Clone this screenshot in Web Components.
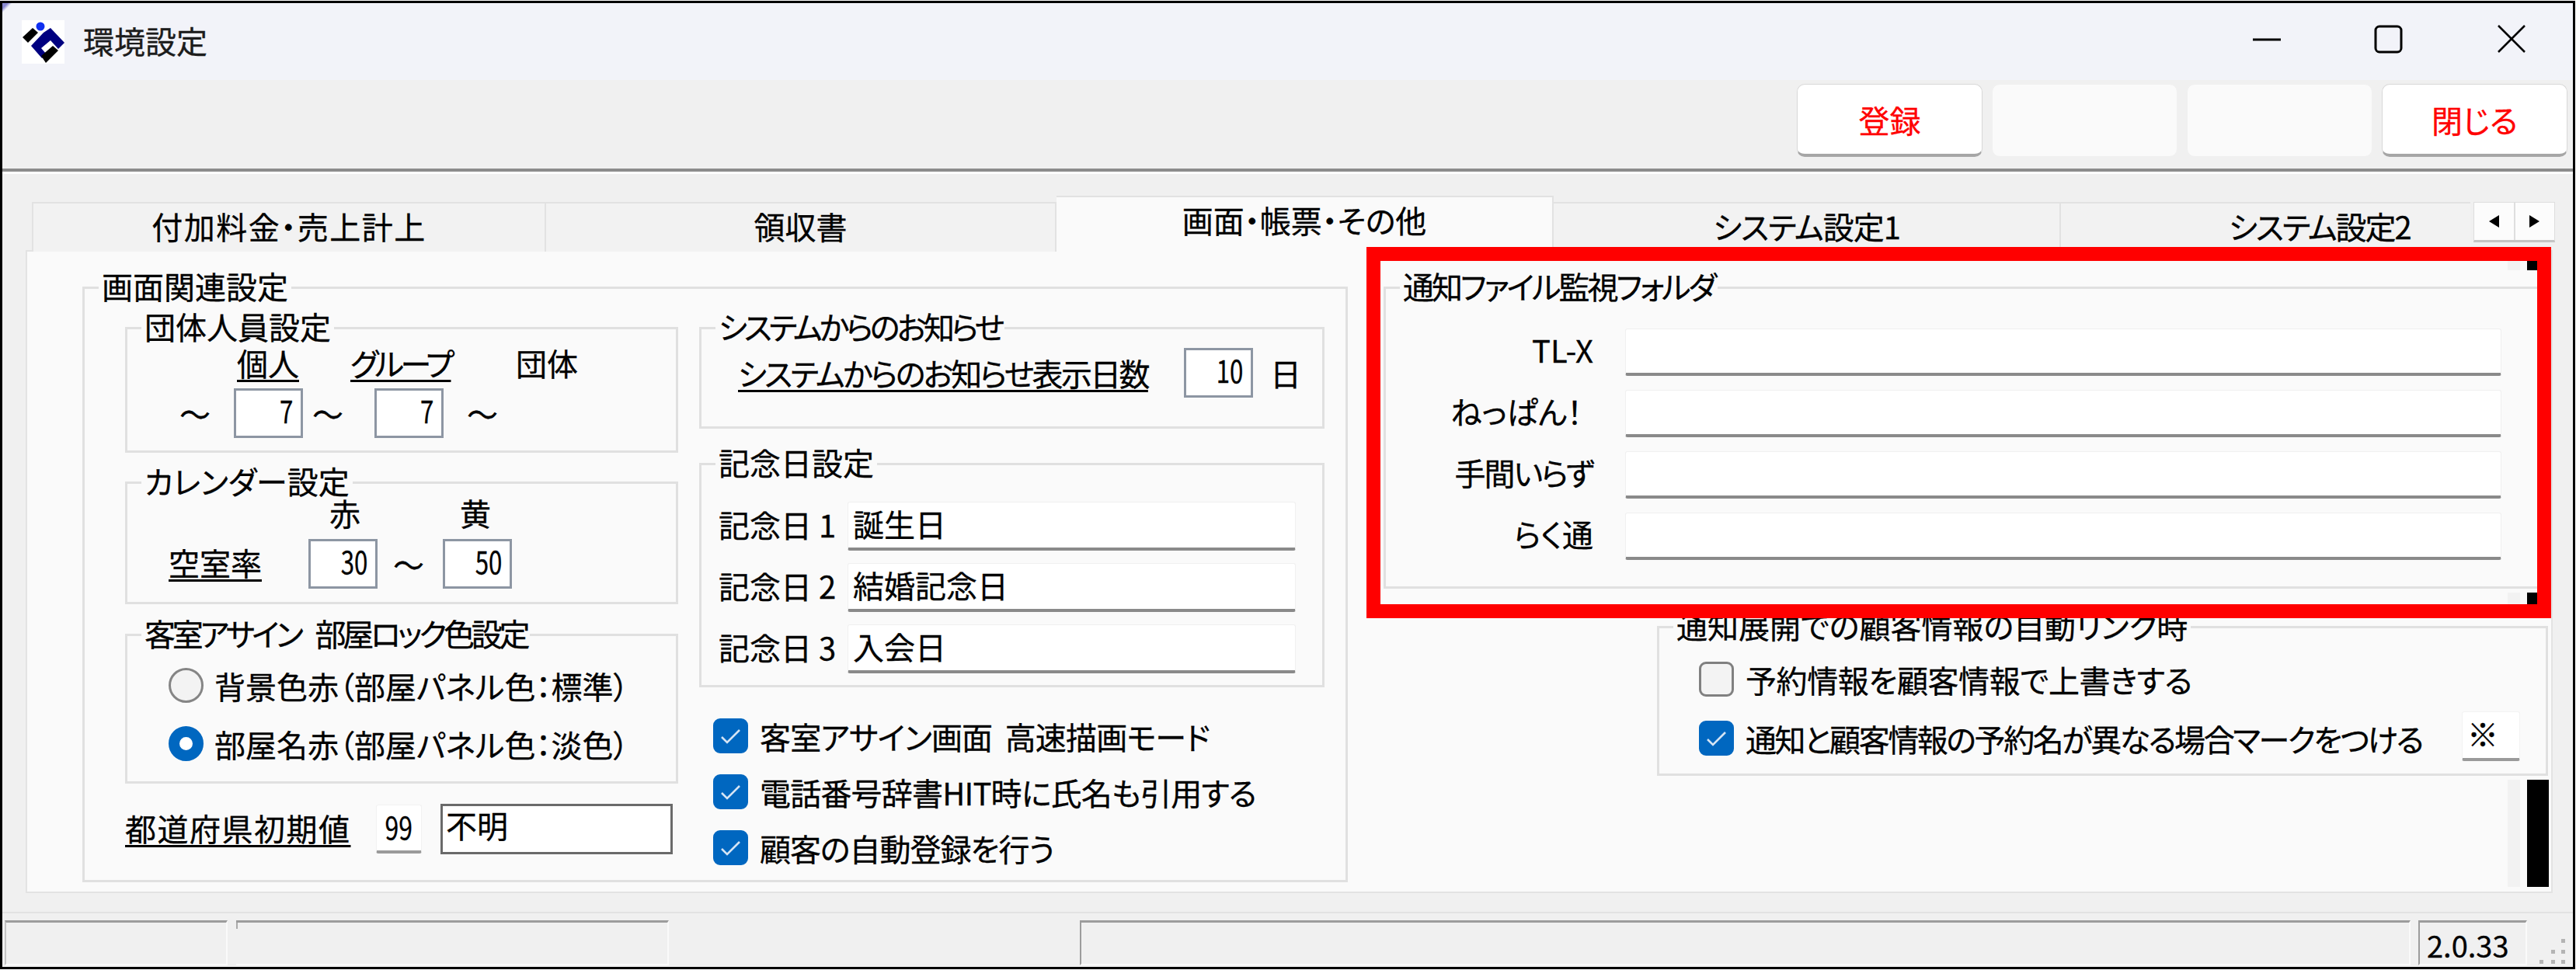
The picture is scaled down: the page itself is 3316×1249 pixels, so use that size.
<!DOCTYPE html>
<html lang="ja">
<head>
<meta charset="utf-8">
<title>環境設定</title>
<style>
  html, body { margin: 0; padding: 0; background: #fff; overflow: hidden; }
</style>
</head>
<body>
<app-window label="環境設定">
  <tool-bar>
    <tool-button>登録</tool-button>
    <tool-button disabled></tool-button>
    <tool-button disabled></tool-button>
    <tool-button>閉じる</tool-button>
  </tool-bar>
  <tab-strip>
    <tab-item size="662" style="letter-spacing:1.5px">付加料金・売上計上</tab-item>
    <tab-item size="657">領収書</tab-item>
    <tab-item size="640" active>画面・帳票・その他</tab-item>
    <tab-item size="653" style="letter-spacing:-1px">システム設定1</tab-item>
    <tab-item size="527" indent="216" style="letter-spacing:-2px">システム設定2</tab-item>
  </tab-strip>
  <tab-page>
    <screen-settings></screen-settings>
    <notice-settings></notice-settings>
  </tab-page>
  <status-bar></status-bar>
  <highlight-box></highlight-box>
</app-window>

<script>
// Crea una clase sencilla: solo estilos + markup dentro del shadow root
function simple(tag, html) {
  customElements.define(tag, class extends HTMLElement {
    constructor() {
      super();
      this.attachShadow({ mode: 'open' });
      this.shadowRoot.innerHTML = typeof html === 'function' ? html(this) : html;
    }
  });
}

// Ventana principal
simple('app-window', el => `
  <style>
    :host {
      display: flex; flex-direction: column; position: relative; box-sizing: border-box;
      width: 3315px; height: 1247px; margin: 1px 1px 1px 0; border: 3px solid #000;
      background: #f0f0f0; color: #000; overflow: hidden;
      font: 400 40px/40px "Noto Sans CJK JP", "Noto Sans", sans-serif;
      font-feature-settings: "palt"; -webkit-text-stroke: .3px;
    }
    .title {
      display: flex; align-items: center; height: 99px; flex: none; background: #f2f3f9;
      background-image: linear-gradient(135deg, #8a8ad0 0, #8a8ad0 5px, transparent 9px);
    }
    .logo { width: 55px; height: 56px; margin: 0 24px 0 25px; flex: none; }
    .name { color: #1c1c1c; margin-bottom: 3px; }
    .ctl { display: flex; margin-left: auto; }
    .ctl svg { display: block; }
  </style>
  <div class="title">
    <svg class="logo" viewBox="0 0 55 56">
      <rect width="55" height="56" fill="#fff"/>
      <circle cx="24" cy="8" r="5.5" fill="#1030f0"/>
      <path d="M1 22 14 10 21 16 8 29Z" fill="#000"/>
      <path d="M12 33 28 16 37 10 55 29 47 37 37 26 25 36 32 44 26 49Z" fill="#000080"/>
      <path d="M25 46 40 33 47 39 31 55Z" fill="#000"/>
    </svg>
    <span class="name">${el.getAttribute('label')}</span>
    <div class="ctl">
      <svg width="412" height="99" viewBox="0 0 412 99" fill="none" stroke="#000" stroke-width="3">
        <path d="M0 47H36"/>
        <rect x="158" y="30" width="33" height="33" rx="5"/>
        <path d="M316 29 350 63M350 29 316 63" stroke-width="2.5"/>
      </svg>
    </div>
  </div>
  <slot></slot>`);

// Barra de botones
simple('tool-bar', `
  <style>
    :host {
      display: flex; justify-content: flex-end; gap: 12px; box-sizing: border-box; flex: none;
      height: 121px; padding: 5px 7px 0 0; background: #f0f0f0;
      border-bottom: 3px solid #fff; box-shadow: inset 0 -4px 0 #8c8c8c;
    }
  </style>
  <slot></slot>`);

simple('tool-button', `
  <style>
    :host {
      display: flex; align-items: center; justify-content: center; box-sizing: border-box;
      width: 239px; height: 94px; border-radius: 10px; background: #fff; color: #f00;
      border: 1px solid #d8d8d8; border-bottom: 4px solid #a6a6a6;
    }
    :host([disabled]) { background: #fafafa; border: 1px solid #f0f0f0; }
  </style>
  <slot></slot>`);

// Pestañas
simple('tab-strip', `
  <style>
    :host {
      display: flex; align-items: flex-end; flex: none; position: relative; z-index: 1;
      height: 72px; margin: 28px 0 -2px 38px;
    }
    .arrows {
      display: flex; align-self: flex-start; box-sizing: border-box; width: 105px; height: 52px;
      margin: 8px 0 0 4px; background: #fcfcfc; border: 1px solid #dedede; border-bottom: 3px solid #c4c4c4;
    }
    .arrows div { flex: 1; display: flex; align-items: center; justify-content: center; }
    .arrows div + div { border-left: 2px solid #dedede; }
    .l { border: 8px solid transparent; border-left: 0; border-right: 13px solid #000; }
    .r { border: 8px solid transparent; border-right: 0; border-left: 13px solid #000; }
  </style>
  <slot></slot>
  <div class="arrows"><div><i class="l"></i></div><div><i class="r"></i></div></div>`);

simple('tab-item', el => `
  <style>
    :host {
      display: flex; align-items: center; justify-content: center; box-sizing: border-box;
      width: ${el.getAttribute('size')}px; height: 64px; padding-bottom: 4px;
      background: #f2f2f2; border: 2px solid #e2e2e2; border-width: 2px 2px 0 0;
    }
    :host(:first-child) { border-left-width: 2px; }
    :host([active]) { height: 72px; background: #fafafa; padding-bottom: 12px; }
    :host([indent]) { justify-content: flex-start; padding-left: ${el.getAttribute('indent')}px; border-right: 0; }
  </style>
  <slot></slot>`);

// Cuerpo de la pestaña
simple('tab-page', `
  <style>
    :host {
      display: grid; grid-template-columns: 1629px 1499px; column-gap: 46px; flex: none;
      box-sizing: border-box; width: 3253px; height: 828px; margin: 0 0 24px 30px;
      padding: 24px 0 0 71px; background: #fafafa; border: 2px solid #e3e3e3;
    }
  </style>
  <slot></slot>`);

// Marco con leyenda
simple('group-box', el => `
  <style>
    :host { display: block; box-sizing: border-box; min-width: 0; }
    fieldset {
      box-sizing: border-box; height: 100%; margin: 0; padding: 0; min-width: 0;
      border: 3px solid #e0e0e0;
    }
    legend {
      margin-left: 18px; padding: 0 4px; line-height: 40px; height: 44px; white-space: pre;
      letter-spacing: var(--legend-spacing, 0);
    }
  </style>
  <fieldset><legend>${el.getAttribute('label')}</legend><slot></slot></fieldset>`);

// Caja de texto
simple('text-field', el => `
  <style>
    :host {
      display: block; box-sizing: border-box; background: #fff; white-space: nowrap; flex: none;
      border: 1px solid #f0f0f0; border-bottom: 4px solid #8a8a8a; border-radius: 3px;
      padding: 7px 6px 0;
    }
    :host([kind="num"]) {
      width: 89px; height: 64px; text-align: right; padding: 5px 10px 0 0; border-radius: 0;
      border: 3px solid #8d96a3;
    }
    :host([kind="frame"]) { border: 3px solid #6a6a6a; padding: 4px 4px 0; border-radius: 0; }
    :host([kind="small"]) { border: 1px solid #f2f2f2; border-bottom: 4px solid #9a9a9a; }
    /* los dígitos del original son muy estrechos */
    span { display: inline-block; }
    :host([kind="num"]) span { transform: scaleX(.78); transform-origin: right; }
    :host([narrow]) span { transform: scaleX(.8); transform-origin: center; }
  </style><span>${el.getAttribute('value') || ''}</span>`);

// Etiqueta (subrayada o no)
simple('form-label', `
  <style>
    :host { display: block; white-space: nowrap; flex: none; line-height: 40px; }
    :host([underline]) {
      text-decoration: underline 3px; text-underline-offset: 5px; text-decoration-skip-ink: none;
    }
  </style><slot></slot>`);

// Casilla
simple('check-box', el => `
  <style>
    :host { display: flex; align-items: center; gap: 15px; height: 45px; white-space: nowrap; }
    .box { width: 45px; height: 45px; box-sizing: border-box; border-radius: 9px; flex: none;
      border: 3px solid #808080; background: #f3f3f3; display: block; }
    :host([checked]) .box { background: #0067c0; border-color: #0067c0; }
  </style>
  <svg class="box" viewBox="0 0 39 39" fill="none">
    ${el.hasAttribute('checked') ? '<path d="M8 21 15 28 31 12" stroke="#d4e4f4" stroke-width="2.6"/>' : ''}
  </svg>
  <span><slot></slot></span>`);

// Botón de opción
simple('radio-button', `
  <style>
    :host { display: flex; align-items: center; gap: 14px; height: 45px; white-space: nowrap; }
    i { width: 45px; height: 45px; box-sizing: border-box; border-radius: 50%; flex: none;
      border: 3px solid #858585; background: #f3f3f3; }
    :host([checked]) i { border: 14px solid #0067c0; background: #fff; }
  </style>
  <i></i><span><slot></slot></span>`);

// Panel izquierdo: 画面関連設定
simple('screen-settings', `
  <style>
    :host { display: block; }
    .outer { height: 788px; }
    .cols { display: grid; grid-template-columns: 712px 805px; column-gap: 27px; padding: 8px 0 0 52px; }
    .col { display: flex; flex-direction: column; }
    .row { display: flex; align-items: center; }
    .g1 { height: 183px; }
    .g2 { height: 179px; margin-top: 16px; }
    .g3 { height: 214px; margin-top: 17px; --legend-spacing: -4.2px; }
    .g4 { height: 152px; --legend-spacing: -4px; }
    .g5 { height: 310px; margin-top: 23px; }
    .radios { display: flex; flex-direction: column; gap: 30px; padding: 21px 0 0 53px; }
    .pref { height: 65px; margin-top: 26px; }
    .memo { display: flex; flex-direction: column; gap: 16px; padding: 27px 0 0 22px; }
    .memo .row { gap: 20px; }
    .memo form-label { width: 146px; padding-bottom: 6px; }
    .memo text-field { width: 577px; height: 63px; }
    .checks { display: flex; flex-direction: column; gap: 27px; margin: 40px 0 0 18px; }
  </style>
  <group-box class="outer" label="画面関連設定">
    <div class="cols">
      <div class="col">
        <group-box class="g1" label="団体人員設定">
          <div class="row" style="padding:3px 0 0 141px">
            <form-label underline>個人</form-label>
            <form-label underline style="margin-left:66px;width:129px;letter-spacing:-4.5px">グループ</form-label>
            <form-label style="margin-left:84px">団体</form-label>
          </div>
          <div class="row" style="margin-top:13px;padding-left:67px">
            <form-label>～</form-label>
            <text-field kind="num" value="7" style="margin-left:30px"></text-field>
            <form-label style="margin-left:12px">～</form-label>
            <text-field kind="num" value="7" style="margin-left:40px"></text-field>
            <form-label style="margin-left:30px">～</form-label>
          </div>
        </group-box>
        <group-box class="g2" label="カレンダー設定">
          <div class="row" style="margin-top:-3px;padding-left:260px">
            <form-label>赤</form-label>
            <form-label style="margin-left:128px">黄</form-label>
          </div>
          <div class="row" style="margin-top:14px;padding-left:53px">
            <form-label underline style="padding-bottom:4px">空室率</form-label>
            <text-field kind="num" value="30" style="margin-left:60px"></text-field>
            <form-label style="margin-left:20px">～</form-label>
            <text-field kind="num" value="50" style="margin-left:24px"></text-field>
          </div>
        </group-box>
        <group-box class="g3" label="客室アサイン    部屋ロック色設定">
          <div class="radios">
            <radio-button>背景色赤（部屋パネル色：標準）</radio-button>
            <radio-button checked>部屋名赤（部屋パネル色：淡色）</radio-button>
          </div>
        </group-box>
        <div class="row pref">
          <form-label underline style="width:289px;letter-spacing:1.5px;padding-bottom:4px">都道府県初期値</form-label>
          <text-field kind="small" narrow value="99" style="width:59px;height:63px;margin-left:34px;padding:7px 0 0;text-align:center"></text-field>
          <text-field kind="frame" value="不明" style="width:299px;height:65px;margin-left:24px"></text-field>
        </div>
      </div>
      <div class="col">
        <group-box class="g4" label="システムからのお知らせ">
          <div class="row" style="padding:4px 0 0 47px">
            <form-label underline style="width:574px;letter-spacing:-2.7px">システムからのお知らせ表示日数</form-label>
            <text-field kind="num" value="10"></text-field>
            <form-label style="margin-left:22px">日</form-label>
          </div>
        </group-box>
        <group-box class="g5" label="記念日設定">
          <div class="memo">
            <div class="row"><form-label>記念日 1</form-label><text-field value="誕生日"></text-field></div>
            <div class="row"><form-label>記念日 2</form-label><text-field value="結婚記念日"></text-field></div>
            <div class="row"><form-label>記念日 3</form-label><text-field value="入会日"></text-field></div>
          </div>
        </group-box>
        <div class="checks">
          <check-box checked style="letter-spacing:-.8px">客室アサイン画面&nbsp;&nbsp;高速描画モード</check-box>
          <check-box checked style="letter-spacing:-.8px">電話番号辞書HIT時に氏名も引用する</check-box>
          <check-box checked style="letter-spacing:-1px">顧客の自動登録を行う</check-box>
        </div>
      </div>
    </div>
  </group-box>`);

// Panel derecho: carpetas y enlace de clientes
simple('notice-settings', `
  <style>
    :host { display: block; position: relative; }
    .folder { height: 410px; --legend-spacing: -3px; }
    .rows {
      display: grid; grid-template-columns: 267px 1128px; column-gap: 41px; row-gap: 18px;
      grid-auto-rows: 61px; align-items: center; padding-top: 31px;
    }
    .rows form-label { text-align: right; padding-bottom: 8px; }
    .rows text-field { height: 61px; }
    .link { width: 1147px; height: 214px; margin: 27px 0 0 352px; }
    .link-body { display: flex; flex-direction: column; gap: 19px; padding: 23px 0 0 51px; }
    .mark-row { display: flex; align-items: center; justify-content: space-between; padding-right: 33px; }
    .mark-row check-box { margin-top: 5px; letter-spacing: -2.4px; }
    .stub { position: absolute; left: 1447px; width: 16px; background: #f2f2f2; }
    .stub::after { content: ""; position: absolute; left: 25px; top: 0; bottom: 0; width: 28px; background: #000; }
  </style>
  <group-box class="folder" label="通知ファイル監視フォルダ">
    <div class="rows">
      <form-label>TL-X</form-label><text-field></text-field>
      <form-label style="padding-right:14px">ねっぱん！</form-label><text-field></text-field>
      <form-label style="letter-spacing:-2px">手間いらず</form-label><text-field></text-field>
      <form-label>らく通</form-label><text-field></text-field>
    </div>
  </group-box>
  <group-box class="link" label="通知展開での顧客情報の自動リンク時">
    <div class="link-body">
      <check-box style="letter-spacing:-.4px">予約情報を顧客情報で上書きする</check-box>
      <div class="mark-row">
        <check-box checked>通知と顧客情報の予約名が異なる場合マークをつける</check-box>
        <text-field kind="small" value="※" style="width:75px;height:64px"></text-field>
      </div>
    </div>
  </group-box>
  <span class="stub" style="top:-18px;height:18px"></span>
  <span class="stub" style="top:415px;height:20px"></span>
  <span class="stub" style="top:656px;height:138px"></span>`);

// Barra de estado
simple('status-bar', `
  <style>
    :host {
      display: flex; box-sizing: border-box; flex: 1; position: relative;
      padding: 9px 0 0 3px; border-top: 2px solid #e2e2e2; font-size: 38px;
    }
    div {
      box-sizing: border-box; height: 58px; flex: none;
      border-top: 3px solid #9c9c9c; border-right: 2px solid #fafafa; border-bottom: 2px solid #fafafa;
    }
    .a { width: 287px; border-left: 2px solid #c4c4c4; margin-right: 11px; }
    .b { width: 557px; margin-right: 529px; background: linear-gradient(#aaa,#aaa) 0 0/2px 8px no-repeat; }
    .c { width: 1713px; border-left: 2px solid #9c9c9c; margin-right: 10px; }
    .d { width: 140px; border-left: 2px solid #9c9c9c; padding: 11px 0 0 9px; line-height: 36px; }
    svg { position: absolute; right: 8px; bottom: 3px; }
  </style>
  <div class="a"></div><div class="b"></div><div class="c"></div><div class="d">2.0.33</div>
  <svg width="36" height="36" fill="#b4b4b4">
    <rect x="29" y="3" width="5" height="5"/><rect x="16" y="17" width="5" height="5"/><rect x="29" y="17" width="5" height="5"/>
    <rect x="1" y="30" width="5" height="5"/><rect x="16" y="30" width="5" height="5"/><rect x="29" y="30" width="5" height="5"/>
  </svg>`);

// Recuadro rojo de la captura
simple('highlight-box', `
  <style>
    :host {
      position: absolute; left: 1756px; top: 314px; width: 1525px; height: 478px;
      box-sizing: border-box; border: 18px solid #f00; z-index: 2; pointer-events: none;
    }
  </style>`);
</script>
</body>
</html>
